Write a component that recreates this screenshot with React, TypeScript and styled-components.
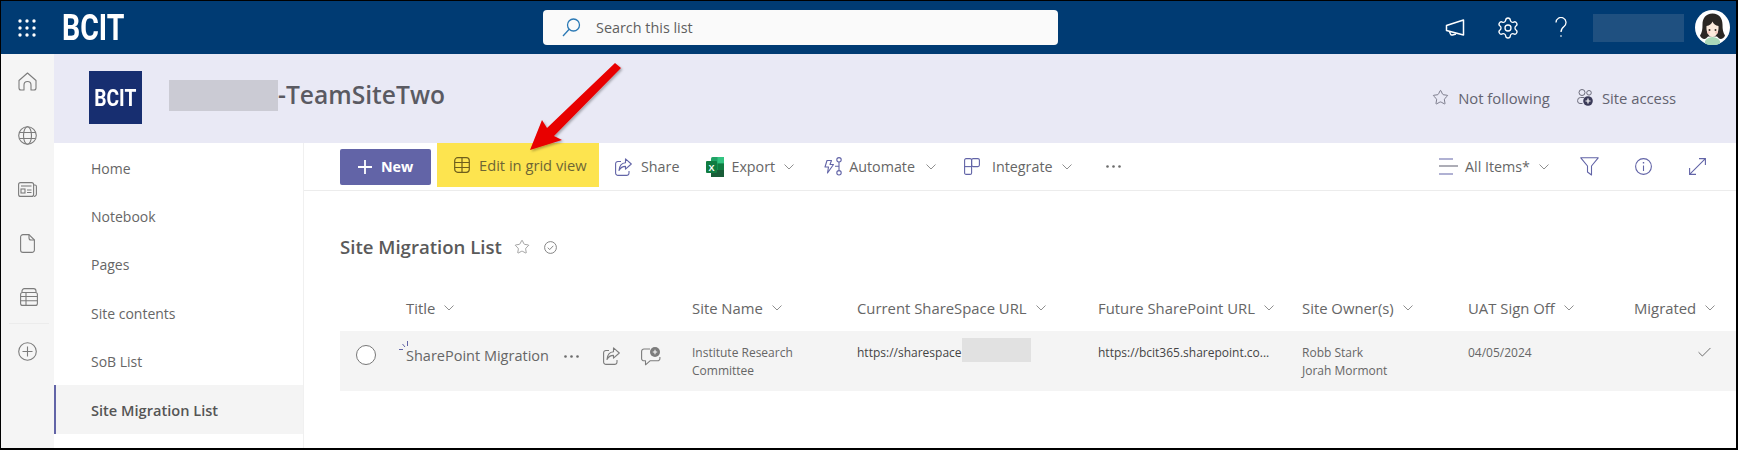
import React from 'react'
import styled, { createGlobalStyle } from 'styled-components'
import { Settings, Star, Check } from 'lucide-react'

const GlobalStyle = createGlobalStyle`
  html, body {
    margin: 0;
    padding: 0;
    background: #fff;
    font-family: "Open Sans", "Noto Sans", Arial, sans-serif;
  }
`

const PURPLE = '#6264a7'
const COLUMNS = '66px 286px 165px 241px 204px 166px 166px 102px'

type IconProps = { color?: string }

function Chevron({ color = '#8f8f8f' }: IconProps) {
  return (
    <svg width="10" height="6" viewBox="0 0 10 6" fill="none" stroke={color} strokeWidth="1">
      <path d="M.5.5 5 5 9.5.5" />
    </svg>
  )
}

function Waffle() {
  const spots = [0, 1, 2].flatMap(r => [0, 1, 2].map(c => [c, r]))
  return (
    <svg width="18" height="18" viewBox="0 0 18 18" fill="#fff">
      {spots.map(([c, r]) => (
        <circle key={`${c}-${r}`} cx={2 + c * 7} cy={2 + r * 7} r="1.7" />
      ))}
    </svg>
  )
}

function SearchIcon() {
  return (
    <svg width="19" height="19" viewBox="0 0 19 19" fill="none" stroke="#2b79b5" strokeWidth="1.3">
      <circle cx="11.5" cy="7" r="6" />
      <path d="M7.2 11.3 1 18" />
    </svg>
  )
}

function Megaphone() {
  return (
    <svg width="20" height="18" viewBox="0 0 20 18" fill="none" stroke="#fff" strokeWidth="1.5" strokeLinejoin="round">
      <path d="M1.5 6.5 18.5 1v15L1.5 11.5z" />
      <path d="M4.5 12.5 5.500 15q.6 1.4 2 1l3.500-1" />
    </svg>
  )
}

function Question() {
  return (
    <svg width="12" height="21" viewBox="0 0 12 21" fill="none" stroke="#fff" strokeWidth="1.3">
      <path d="M1 5.500a5 5 0 1 1 8 4C7 11 6 12 6 15" />
      <path d="M6 18.200v1.600" />
    </svg>
  )
}

function Avatar() {
  return (
    <svg width="35" height="35" viewBox="0 0 35 35">
      <circle cx="17.5" cy="17.5" r="17.5" fill="#fff" />
      <path d="M10 33.500V31c2-3 5-4 7.500-4s5.500 1 7.500 4v2.500a17.500 17.500 0 0 1-15 0z" fill="#a9d8b8" />
      <path d="M17.500 3.500c-7 0-10 5-10 11 0 5-.5 8-2.500 11 1 3 4 4 6 3l2-2h9l2 2c2 1 5 0 6-3-2-3-2.500-6-2.500-11 0-6-3-11-10-11z" fill="#2b2724" />
      <path d="M11.500 16c3-.5 5-2 6-4.500 1 2.500 3 4 6 4.500.5 6-2 11-6 11s-6.500-5-6-11z" fill="#fbeadc" />
      <circle cx="14.500" cy="20" r="1" fill="#3a3028" />
      <circle cx="20.500" cy="20" r="1" fill="#3a3028" />
      <circle cx="13.500" cy="22.500" r="1.300" fill="#f7c6bb" />
      <circle cx="21.500" cy="22.500" r="1.300" fill="#f7c6bb" />
    </svg>
  )
}

function RailHome() {
  return (
    <svg width="19" height="19" viewBox="0 0 19 19" fill="none" stroke="#7c7c7c" strokeWidth="1.1" strokeLinejoin="round">
      <path d="M1 8.500 9.500 1 18 8.500V16a2 2 0 0 1-2 2h-3v-5a3.500 3.500 0 0 0-7 0v5H3a2 2 0 0 1-2-2z" />
    </svg>
  )
}

function RailGlobe() {
  return (
    <svg width="19" height="19" viewBox="0 0 19 19" fill="none" stroke="#7c7c7c" strokeWidth="1.1">
      <circle cx="9.500" cy="9.500" r="8.800" />
      <ellipse cx="9.500" cy="9.500" rx="4" ry="8.800" />
      <path d="M1.500 6.500h16M1.500 12.500h16" />
    </svg>
  )
}

function RailNews() {
  return (
    <svg width="19" height="15" viewBox="0 0 19 15" fill="none" stroke="#7c7c7c" strokeWidth="1.1">
      <rect x=".6" y=".6" width="15" height="13.800" rx="2" />
      <path d="M16 3h1a1.400 1.400 0 0 1 1.400 1.400V12a2.400 2.400 0 0 1-2.400 2.400" />
      <path d="M3 4h10.500" />
      <rect x="3" y="7" width="4" height="4" />
      <path d="M9 8h4.500M9 10.500h4.500" />
    </svg>
  )
}

function RailFile() {
  return (
    <svg width="15" height="19" viewBox="0 0 15 19" fill="none" stroke="#7c7c7c" strokeWidth="1.1" strokeLinejoin="round">
      <path d="M3 .6h6l5.400 5.400V16a2.400 2.400 0 0 1-2.400 2.400H3A2.400 2.400 0 0 1 .6 16V3A2.400 2.400 0 0 1 3 .6z" />
      <path d="M9 .6V4a2 2 0 0 0 2 2h3.400" />
    </svg>
  )
}

function RailList() {
  return (
    <svg width="18" height="18" viewBox="0 0 18 18" fill="none" stroke="#7c7c7c" strokeWidth="1.1">
      <path d="M2 4.500V3A2.400 2.400 0 0 1 4.400.6h9.200A2.400 2.400 0 0 1 16 3v1.500" />
      <rect x=".6" y="4.500" width="16.800" height="12.900" rx="2" />
      <path d="M.6 8.500h16.800M.6 12.800h16.800M6 4.500v12.900" />
    </svg>
  )
}

function RailAdd() {
  return (
    <svg width="19" height="19" viewBox="0 0 19 19" fill="none" stroke="#7c7c7c" strokeWidth="1.1">
      <circle cx="9.500" cy="9.500" r="8.800" />
      <path d="M9.500 4.500v10M4.500 9.500h10" />
    </svg>
  )
}

function SiteAccess() {
  return (
    <svg width="16" height="17" viewBox="0 0 16 17" fill="none" stroke="#6b6b7a" strokeWidth="1">
      <circle cx="5" cy="3.500" r="3" />
      <circle cx="12" cy="3.800" r="2.300" />
      <path d="M5.500 14.500H3A2.500 2.500 0 0 1 .6 12v-.5A3 3 0 0 1 3.600 8.500H7" />
      <circle cx="11" cy="12" r="4.800" fill="#3b3a58" stroke="none" />
      <path d="M11 9.500v5M8.500 12h5" stroke="#fff" strokeWidth="1.200" />
    </svg>
  )
}

function GridIcon() {
  return (
    <svg width="16" height="16" viewBox="0 0 16 16" fill="none" stroke="#6e5e1c" strokeWidth="1.200">
      <rect x=".7" y=".7" width="14.600" height="14.600" rx="3" />
      <path d="M.7 5.500h14.600M.7 10.500h14.600M8 .7v14.600" />
    </svg>
  )
}

function ShareIcon({ color = PURPLE }: IconProps) {
  return (
    <svg width="17" height="18" viewBox="0 0 17 18" fill="none" stroke={color} strokeWidth="1.100" strokeLinejoin="round">
      <path d="M6 3.500H3A2.400 2.400 0 0 0 .6 6v9A2.400 2.400 0 0 0 3 17.400h8.500A2.400 2.400 0 0 0 14 15v-2" />
      <path d="M10.500.8 16.300 6l-5.800 5.200V8.400C7.500 8.400 5.500 9.500 4 12.500c.4-4.800 2.800-7.400 6.500-7.700z" />
    </svg>
  )
}

function ExcelIcon() {
  return (
    <svg width="18" height="20" viewBox="0 0 18 20">
      <rect x="5" y="0" width="13" height="20" rx="1.500" fill="#21a366" />
      <rect x="11.500" y="0" width="6.500" height="6.500" fill="#33c481" />
      <rect x="11.500" y="6.500" width="6.500" height="6.500" fill="#107c41" />
      <rect x="5" y="13" width="13" height="7" fill="#185c37" />
      <rect x="0" y="4" width="11" height="12" rx="1" fill="#107c41" />
      <text x="5.500" y="13.500" textAnchor="middle" fontSize="9" fontWeight="700" fontFamily="Liberation Sans" fill="#fff">X</text>
    </svg>
  )
}

function AutomateIcon() {
  return (
    <svg width="19" height="19" viewBox="0 0 19 19" fill="none" stroke={PURPLE} strokeWidth="1.100" strokeLinejoin="round">
      <path d="M3 3.500h4.500L6 7.500h3.500L3.500 16l1-6H1z" />
      <circle cx="15" cy="2.800" r="2.200" />
      <circle cx="15" cy="15.800" r="2.200" />
      <path d="M15 5v8.500M15 9.300h-4" />
    </svg>
  )
}

function IntegrateIcon() {
  return (
    <svg width="16" height="17" viewBox="0 0 16 17" fill="none" stroke={PURPLE} strokeWidth="1.100">
      <rect x=".6" y=".6" width="7" height="15.800" rx="1.500" />
      <rect x="7.600" y=".6" width="7.800" height="8" rx="1.500" />
      <path d="M.6 8.600h7" />
    </svg>
  )
}

function Dots({ color = '#6b6b6b' }: IconProps) {
  return (
    <svg width="15" height="3" viewBox="0 0 15 3" fill={color}>
      <circle cx="1.500" cy="1.500" r="1.300" />
      <circle cx="7.500" cy="1.500" r="1.300" />
      <circle cx="13.500" cy="1.500" r="1.300" />
    </svg>
  )
}

function ViewIcon() {
  return (
    <svg width="19" height="17" viewBox="0 0 19 17" fill="none" stroke={PURPLE} strokeWidth="1.100">
      <path d="M0 8h19" stroke="#6b6b7a" />
      <path d="M0 1h14M0 16h14" />
    </svg>
  )
}

function FilterIcon() {
  return (
    <svg width="19" height="19" viewBox="0 0 19 19" fill="none" stroke={PURPLE} strokeWidth="1.100" strokeLinejoin="round">
      <path d="M.8.8h17.400l-6.700 8.200V18l-4-3V9z" />
    </svg>
  )
}

function InfoIcon() {
  return (
    <svg width="17" height="17" viewBox="0 0 17 17" fill="none" stroke={PURPLE} strokeWidth="1.100">
      <circle cx="8.500" cy="8.500" r="7.900" />
      <path d="M8.500 7.500v5.500" />
      <path d="M8.500 4v1.500" strokeWidth="1.400" />
    </svg>
  )
}

function ExpandIcon() {
  return (
    <svg width="17" height="17" viewBox="0 0 17 17" fill="none" stroke={PURPLE} strokeWidth="1.100">
      <path d="M10 .6h6.400V7M16.400.6.600 16.400M.600 10v6.400H7" />
    </svg>
  )
}

function CircleCheck() {
  return (
    <svg width="13" height="13" viewBox="0 0 13 13" fill="none" stroke="#777" strokeWidth=".9">
      <circle cx="6.500" cy="6.500" r="5.900" />
      <path d="M3.800 6.700 5.700 8.600 9.300 4.800" />
    </svg>
  )
}

function Sparkle() {
  return (
    <svg width="10" height="10" viewBox="0 0 10 10" fill="none" stroke={PURPLE} strokeWidth="1">
      <path d="M0 8.500h4M3.500 3 6 6M8.500 0v5" />
    </svg>
  )
}

function CommentAdd() {
  return (
    <svg width="20" height="19" viewBox="0 0 20 19" fill="none" stroke="#7c7c7c" strokeWidth="1.100" strokeLinejoin="round">
      <path d="M9 2H3A2.400 2.400 0 0 0 .6 4.400v7A2.400 2.400 0 0 0 3 13.800h1.500v4l4.500-4h7.500a2.400 2.400 0 0 0 2.400-2.400V10" />
      <circle cx="14" cy="5" r="5" fill="#7c7c7c" stroke="none" />
      <path d="M14 2.800v4.400M11.800 5h4.400" stroke="#f5f5f5" strokeWidth="1.100" />
    </svg>
  )
}

function RedArrow() {
  return (
    <svg width="100" height="95" viewBox="525 60 100 95">
      <defs>
        <filter id="arrow-shadow" x="-10%" y="-10%" width="125%" height="125%">
          <feDropShadow dx="1.500" dy="1.500" stdDeviation="1.200" floodColor="#000" floodOpacity=".3" />
        </filter>
      </defs>
      <polygon
        points="615,63 621,68 554,136 562,140 530,150 542,120 547,128"
        fill="#e80505"
        filter="url(#arrow-shadow)"
      />
    </svg>
  )
}

const navItems = ['Home', 'Notebook', 'Pages', 'Site contents', 'SoB List', 'Site Migration List']
const columns = ['Site Name', 'Current ShareSpace URL', 'Future SharePoint URL', 'Site Owner(s)', 'UAT Sign Off', 'Migrated']

export default function App() {
  return (
    <>
      <GlobalStyle />
      <Page>
        <TopBar>
          <WaffleCell>
            <Waffle />
          </WaffleCell>
          <BrandCell>
            <BrandText>BCIT</BrandText>
          </BrandCell>
          <SearchBox>
            <SearchIcon />
            <span>Search this list</span>
          </SearchBox>
          <TopActions>
            <TopIcon>
              <Megaphone />
            </TopIcon>
            <TopIcon>
              <Settings size={24} color="#fff" strokeWidth={1.3} />
            </TopIcon>
            <TopIcon>
              <Question />
            </TopIcon>
            <UserBlock />
            <AvatarWrap>
              <Avatar />
            </AvatarWrap>
          </TopActions>
        </TopBar>

        <Body>
          <Rail>
            <RailItem><RailHome /></RailItem>
            <RailItem><RailGlobe /></RailItem>
            <RailItem><RailNews /></RailItem>
            <RailItem><RailFile /></RailItem>
            <RailItem $divider><RailList /></RailItem>
            <RailItem><RailAdd /></RailItem>
          </Rail>

          <Content>
            <SiteHeader>
              <SiteLogo>
                <SiteLogoText>BCIT</SiteLogoText>
              </SiteLogo>
              <SiteNameBlur />
              <SiteTitle>-TeamSiteTwo</SiteTitle>
              <SiteActions>
                <SiteAction>
                  <Star size={17} color="#5f5f70" strokeWidth={1.1} />
                  Not following
                </SiteAction>
                <SiteAction>
                  <SiteAccess />
                  Site access
                </SiteAction>
              </SiteActions>
            </SiteHeader>

            <Columns>
              <Nav>
                {navItems.map(item => (
                  <NavItem key={item} $active={item === 'Site Migration List'}>
                    {item}
                  </NavItem>
                ))}
              </Nav>

              <Main>
                <CommandBar>
                  <NewButton>
                    <PlusMark viewBox="0 0 14 14">
                      <path d="M7 0v14M0 7h14" />
                    </PlusMark>
                    New
                  </NewButton>
                  <Highlighted>
                    <GridIcon />
                    Edit in grid view
                  </Highlighted>
                  <Command $left={16}>
                    <ShareIcon />
                    Share
                  </Command>
                  <Command $left={27} $gap={7}>
                    <ExcelIcon />
                    Export
                    <CommandChevron><Chevron /></CommandChevron>
                  </Command>
                  <Command $left={30} $gap={6}>
                    <AutomateIcon />
                    Automate
                    <CommandChevron $left={5}><Chevron /></CommandChevron>
                  </Command>
                  <Command $left={28} $gap={12}>
                    <IntegrateIcon />
                    Integrate
                    <CommandChevron $left={-3}><Chevron /></CommandChevron>
                  </Command>
                  <Command $left={34}>
                    <Dots />
                  </Command>
                  <CommandRight>
                    <Command $left={0} $gap={7}>
                      <ViewIcon />
                      All Items*
                      <CommandChevron><Chevron /></CommandChevron>
                    </Command>
                    <CommandIcon $left={31}><FilterIcon /></CommandIcon>
                    <CommandIcon $left={36}><InfoIcon /></CommandIcon>
                    <CommandIcon $left={37}><ExpandIcon /></CommandIcon>
                  </CommandRight>
                </CommandBar>

                <ListTitle>
                  <ListName>Site Migration List</ListName>
                  <Star size={16} color="#777" strokeWidth={1} />
                  <TitleCheck><CircleCheck /></TitleCheck>
                </ListTitle>

                <HeaderRow>
                  <span />
                  <HeaderCell>
                    Title
                    <Chevron />
                  </HeaderCell>
                  {columns.map(col => (
                    <HeaderCell key={col}>
                      {col}
                      <Chevron />
                    </HeaderCell>
                  ))}
                </HeaderRow>

                <DataRow>
                  <RadioCell>
                    <Radio />
                  </RadioCell>
                  <TitleCell>
                    <ItemName>
                      <SparkleMark><Sparkle /></SparkleMark>
                      SharePoint Migration
                    </ItemName>
                    <RowDots><Dots /></RowDots>
                    <RowShare><ShareIcon color="#7c7c7c" /></RowShare>
                    <RowComment><CommentAdd /></RowComment>
                  </TitleCell>
                  <Cell>
                    Institute Research
                    <br />
                    Committee
                  </Cell>
                  <LinkCell>
                    https://sharespace
                    <UrlBlur />
                  </LinkCell>
                  <LinkCell>https://bcit365.sharepoint.co...</LinkCell>
                  <Cell>
                    Robb Stark
                    <br />
                    Jorah Mormont
                  </Cell>
                  <Cell>04/05/2024</Cell>
                  <CheckCell>
                    <Check size={17} color="#555" strokeWidth={1.2} />
                  </CheckCell>
                </DataRow>
              </Main>
            </Columns>
          </Content>
        </Body>

        <ArrowLayer>
          <RedArrow />
        </ArrowLayer>
      </Page>
    </>
  )
}

const Page = styled.div`
  position: relative;
  box-sizing: border-box;
  width: 1738px;
  height: 450px;
  display: flex;
  flex-direction: column;
  overflow: hidden;
  border-style: solid;
  border-color: #000;
  border-width: 1px 2px 2px 1px;
  background: #fff;
`

const TopBar = styled.header`
  flex: 0 0 53px;
  display: flex;
  align-items: center;
  background: #003b73;
`

const WaffleCell = styled.div`
  width: 61px;
  padding-left: 17px;
  box-sizing: border-box;
  display: flex;
`

const BrandCell = styled.div`
  width: 481px;
`

const BrandText = styled.span`
  display: inline-block;
  font-family: Roboto, "Liberation Sans", sans-serif;
  font-weight: 700;
  font-size: 37px;
  line-height: 40px;
  color: #fff;
  transform: scaleX(0.77);
  transform-origin: left center;
`

const SearchBox = styled.div`
  width: 515px;
  height: 35px;
  box-sizing: border-box;
  padding-left: 19px;
  display: flex;
  align-items: center;
  gap: 15px;
  background: #fafafa;
  border-radius: 4px;
  font-size: 14.4px;
  color: #5f5f5f;
  margin-top: -1px;
`

const TopActions = styled.div`
  margin-left: auto;
  padding-right: 6px;
  display: flex;
  align-items: center;
`

const TopIcon = styled.div`
  width: 53px;
  display: flex;
  justify-content: center;
`

const UserBlock = styled.div`
  width: 91px;
  height: 28px;
  margin-left: 6px;
  background: #1f5080;
`

const AvatarWrap = styled.div`
  margin-left: 11px;
  display: flex;
`

const Body = styled.div`
  flex: 1;
  display: flex;
  min-height: 0;
`

const Rail = styled.nav`
  flex: 0 0 53px;
  background: #f5f5f5;
  display: flex;
  flex-direction: column;
`

const RailItem = styled.div<{ $divider?: boolean }>`
  height: 54px;
  box-sizing: border-box;
  display: flex;
  align-items: center;
  justify-content: center;
  ${p => p.$divider && 'border-bottom: 1px solid #ececec; margin: 0 5px 0 8px;'}
`

const Content = styled.div`
  flex: 1;
  min-width: 0;
  display: flex;
  flex-direction: column;
`

const SiteHeader = styled.div`
  flex: 0 0 89px;
  box-sizing: border-box;
  padding: 0 60px 2px 35px;
  display: flex;
  align-items: center;
  background: #e9e9f5;
`

const SiteLogo = styled.div`
  width: 53px;
  height: 53px;
  display: flex;
  align-items: center;
  justify-content: center;
  background: #172e70;
`

const SiteLogoText = styled.span`
  font-family: Roboto, "Liberation Sans", sans-serif;
  font-weight: 700;
  font-size: 24px;
  color: #fff;
  transform: scaleX(0.8);
`

const SiteNameBlur = styled.div`
  width: 109px;
  height: 31px;
  margin: 0 0 4px 27px;
  background: #cbcbd4;
`

const SiteTitle = styled.h1`
  margin: 0 0 7px;
  font-size: 24.6px;
  font-weight: 600;
  color: #5a5a62;
`

const SiteActions = styled.div`
  margin: 0 0 0 auto;
  display: flex;
  gap: 27px;
`

const SiteAction = styled.div`
  display: flex;
  align-items: center;
  gap: 9px;
  font-size: 14.8px;
  color: #636370;
`

const Columns = styled.div`
  flex: 1;
  display: flex;
  min-height: 0;
`

const Nav = styled.nav`
  flex: 0 0 249px;
  padding-top: 1px;
  border-right: 1px solid #f0f0f0;
`

const NavItem = styled.div<{ $active?: boolean }>`
  height: 48.3px;
  box-sizing: border-box;
  display: flex;
  align-items: center;
  padding-left: ${p => (p.$active ? 35 : 37)}px;
  font-size: ${p => (p.$active ? 14.6 : 14)}px;
  color: #666;
  ${p =>
    p.$active &&
    `
    border-left: 2px solid ${PURPLE};
    background: #f4f4f4;
    font-weight: 600;
    color: #555;
  `}
`

const Main = styled.main`
  flex: 1;
  min-width: 0;
`

const CommandBar = styled.div`
  height: 48px;
  box-sizing: border-box;
  padding: 0 30px 0 36px;
  display: flex;
  align-items: center;
  border-bottom: 1px solid #ececec;
  font-size: 14.3px;
  color: #666;
`

const NewButton = styled.div`
  width: 91px;
  height: 36px;
  box-sizing: border-box;
  padding-left: 18px;
  display: flex;
  align-items: center;
  gap: 9px;
  background: ${PURPLE};
  border-radius: 2px;
  color: #fff;
  font-weight: 700;
`

const PlusMark = styled.svg`
  width: 14px;
  height: 14px;
  fill: none;
  stroke: #fff;
  stroke-width: 1.8;
`

const Highlighted = styled.div`
  width: 162px;
  height: 44px;
  margin: -3px 0 0 6px;
  box-sizing: border-box;
  padding-left: 17px;
  display: flex;
  align-items: center;
  gap: 9px;
  background: #fde44f;
  color: #6e6635;
  font-size: 14.7px;
`

const Command = styled.div<{ $left: number; $gap?: number }>`
  margin-left: ${p => p.$left}px;
  display: flex;
  align-items: center;
  gap: ${p => p.$gap ?? 9}px;
`

const CommandChevron = styled.span<{ $left?: number }>`
  margin-left: ${p => p.$left ?? 2}px;
  display: flex;
`

const CommandRight = styled.div`
  margin-left: auto;
  display: flex;
  align-items: center;
`

const CommandIcon = styled.span<{ $left: number }>`
  margin-left: ${p => p.$left}px;
  display: flex;
`

const ListTitle = styled.div`
  height: 94px;
  box-sizing: border-box;
  padding: 42px 0 0 36px;
  display: flex;
  align-items: flex-start;
`

const ListName = styled.h2`
  margin: 0 12px 0 0;
  font-size: 18.6px;
  line-height: 28px;
  font-weight: 600;
  color: #5a5a5a;

  & + svg {
    margin-top: 6px;
  }
`

const TitleCheck = styled.span`
  margin: 8px 0 0 14px;
  display: flex;
`

const HeaderRow = styled.div`
  height: 46px;
  margin-left: 36px;
  display: grid;
  grid-template-columns: ${COLUMNS};
  align-items: center;
`

const HeaderCell = styled.div`
  display: flex;
  align-items: center;
  gap: 9px;
  font-size: 14.85px;
  font-weight: 500;
  color: #666;
  white-space: nowrap;
`

const DataRow = styled.div`
  height: 60px;
  margin-left: 36px;
  display: grid;
  grid-template-columns: ${COLUMNS};
  background: #f4f4f4;
`

const RadioCell = styled.div`
  padding: 14px 0 0 16px;
`

const Radio = styled.div`
  width: 20px;
  height: 20px;
  box-sizing: border-box;
  border: 1px solid #777;
  border-radius: 50%;
  background: #fff;
`

const TitleCell = styled.div`
  padding-top: 15px;
  display: flex;
  align-items: center;
  align-self: start;
`

const ItemName = styled.span`
  position: relative;
  width: 158px;
  font-size: 14.5px;
  line-height: 20px;
  color: #666;
  white-space: nowrap;
`

const SparkleMark = styled.span`
  position: absolute;
  left: -7px;
  top: -5px;
  display: flex;
`

const RowDots = styled.span`
  display: flex;
`

const RowShare = styled.span`
  margin-left: 24px;
  display: flex;
`

const RowComment = styled.span`
  margin-left: 21px;
  display: flex;
`

const Cell = styled.div`
  padding-top: 13px;
  font-size: 12px;
  line-height: 18px;
  color: #666;
  white-space: nowrap;
`

const LinkCell = styled(Cell)`
  display: flex;
  align-items: flex-start;
  color: #444;
`

const UrlBlur = styled.span`
  width: 69px;
  height: 24px;
  margin-top: -6px;
  background: #e1e1e1;
`

const CheckCell = styled.div`
  padding: 13px 0 0 62px;
`

const ArrowLayer = styled.div`
  position: absolute;
  left: 524px;
  top: 59px;
  display: flex;
  pointer-events: none;
`
